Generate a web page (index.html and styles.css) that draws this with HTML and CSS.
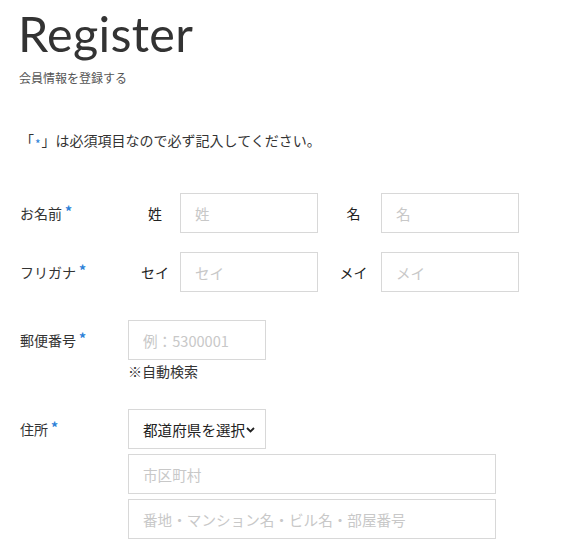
FILE: index.html
```html
<!DOCTYPE html>
<html lang="ja">
<head>
<meta charset="utf-8">
<title>Register</title>
<link rel="stylesheet" href="styles.css">
</head>
<body>
<div class="page">
  <header class="head">
    <h1 class="title">Register</h1>
    <p class="sub">会員情報を登録する</p>
  </header>
  <p class="note">「<span class="req-s">*</span>」は必須項目なので必ず記入してください。</p>

  <form class="form">
    <div class="row">
      <div class="label">お名前<span class="req">*</span></div>
      <div class="pair">
        <span class="sublabel">姓</span>
        <input class="field short" type="text" placeholder="姓">
        <span class="sublabel second">名</span>
        <input class="field short" type="text" placeholder="名">
      </div>
    </div>
    <div class="row">
      <div class="label">フリガナ<span class="req">*</span></div>
      <div class="pair">
        <span class="sublabel">セイ</span>
        <input class="field short" type="text" placeholder="セイ">
        <span class="sublabel second">メイ</span>
        <input class="field short" type="text" placeholder="メイ">
      </div>
    </div>
    <div class="row zip">
      <div class="label">郵便番号<span class="req">*</span></div>
      <div class="stack">
        <input class="field short" type="text" placeholder="例：5300001">
        <span class="hint">※自動検索</span>
      </div>
    </div>
    <div class="row addr">
      <div class="label">住所<span class="req">*</span></div>
      <div class="stack tight">
        <div class="select">
          <span>都道府県を選択</span>
          <svg class="chev" width="9" height="6" viewBox="0 0 9 6"><path d="M1 1l3.5 3.5L8 1" fill="none" stroke="#222" stroke-width="1.8"/></svg>
        </div>
        <input class="field long" type="text" placeholder="市区町村">
        <input class="field long" type="text" placeholder="番地・マンション名・ビル名・部屋番号">
      </div>
    </div>
  </form>
</div>
</body>
</html>
```
FILE: styles.css
```css
* { box-sizing: border-box; }
html, body { margin: 0; padding: 0; background: #fff; }
body {
  font-family: "Noto Sans CJK JP", "Noto Sans", sans-serif;
  color: #333;
}
.page { padding: 0 0 0 18px; }
.head { padding-top: 3px; }
.title {
  margin: 0;
  font-family: Lato, "Noto Sans", sans-serif;
  font-weight: 400;
  font-size: 48.5px;
  line-height: 60px;
  color: #333;
  letter-spacing: 0.3px;
}
.sub {
  margin: 6px 0 0 1px;
  font-size: 12px;
  line-height: 18px;
  color: #555;
}
.note {
  margin: 43px 0 0 2px;
  font-size: 14px;
  line-height: 20px;
  height: 20px;
  color: #333;
}
.req-s { color: #2b7fd8; font-size: 12px; line-height: 1; margin: 0 1px; position: relative; top: 3px; }
.req { color: #2b7fd8; margin-left: 3px; font-size: 14px; position: relative; top: -2px; font-weight: 700; }
.form { margin-top: 43px; display: flex; flex-direction: column; gap: 19px; }
.row { display: grid; grid-template-columns: 110px 1fr; align-items: start; }
.label {
  padding-left: 2px;
  font-size: 14px;
  line-height: 40px;
  color: #333;
}
.pair { display: flex; align-items: center; }
.sublabel {
  width: 52px;
  text-align: center;
  font-size: 14px;
  color: #222;
  padding-left: 2px;
}
.sublabel.second { width: 63px; padding-left: 8px; }
.field {
  height: 40px;
  border: 1px solid #d8d8d8;
  border-radius: 0;
  padding: 0 14px;
  font-family: inherit;
  font-size: 14.6px;
  color: #333;
  background: #fff;
  outline: none;
}
.field::placeholder { color: #c8c8c8; }
.short { width: 138px; }
.long { width: 368px; height: 40px; }
.zip { margin-top: 9px; }
.addr { margin-top: 9px; }
.stack { display: flex; flex-direction: column; align-items: flex-start; }
.stack.tight { gap: 5px; }
.hint { font-size: 14px; line-height: 20px; margin-top: 1px; color: #333; }
.select {
  width: 138px;
  height: 40px;
  border: 1px solid #d8d8d8;
  display: flex;
  align-items: center;
  padding-left: 14px;
  font-size: 14.6px;
  color: #222;
  gap: 1px;
}
.chev { margin-top: 1px; }
```
